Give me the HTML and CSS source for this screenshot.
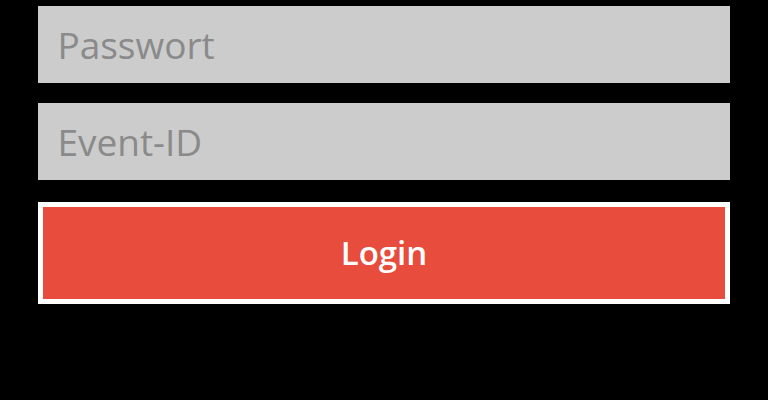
FILE: index.html
```html
<!DOCTYPE html>
<html lang="de">
<head>
  <meta charset="UTF-8">
  <meta name="viewport" content="width=device-width, initial-scale=1.0">
  <title>Login</title>
  <link rel="stylesheet" href="styles.css">
</head>
<body>

  <form class="login-form">
    <input type="password" class="field" placeholder="Passwort">
    <input type="text" class="field" placeholder="Event-ID">
    <button type="submit" class="btn-login">Login</button>
  </form>

</body>
</html>
```

FILE: styles.css
```css
/* General Styles */
body {
  font-family: 'Open Sans', 'Noto Sans', sans-serif;
  background-color: #000;
  margin: 0;
  padding: 0;
}

/* Login Form */
.login-form {
  width: 90%;
  margin: 6px auto 0;
  display: flex;
  flex-direction: column;
}

.field {
  font-family: inherit;
  font-size: 37px;
  height: 77px;
  padding: 0 19px;
  margin: 0 0 20px;
  border: none;
  border-radius: 0;
  background: #cccccc;
  color: #333;
  box-sizing: border-box;
  outline: none;
}

.field::placeholder {
  color: #8a8a8a;
}

.btn-login {
  font-family: inherit;
  font-size: 33px;
  font-weight: 600;
  height: 102px;
  margin-top: 2px;
  padding-bottom: 2px;
  background: #e74c3c;
  color: #fff;
  border: 5px solid #fff;
  border-radius: 0;
  cursor: pointer;
  box-sizing: border-box;
}
```
